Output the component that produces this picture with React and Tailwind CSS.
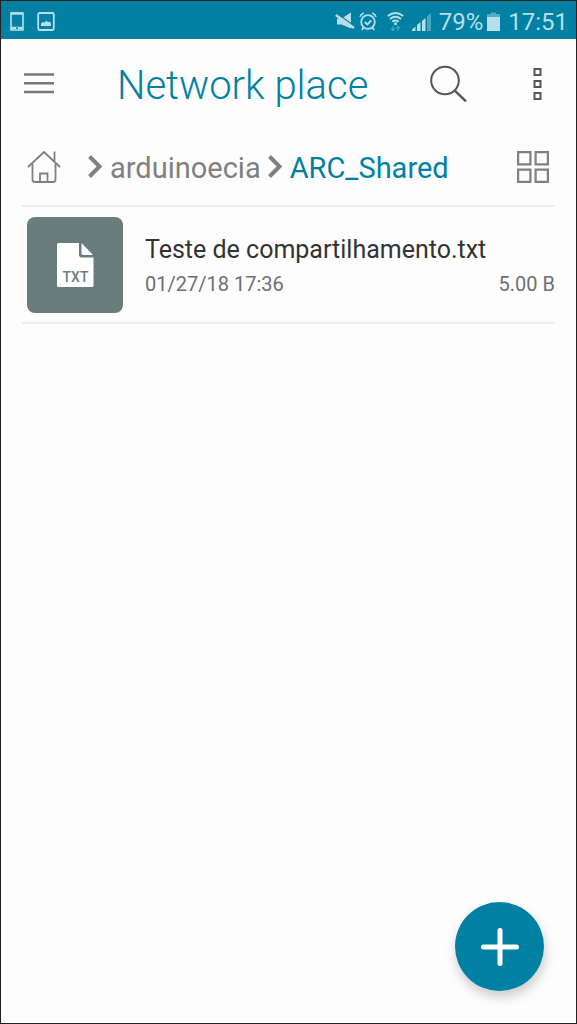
import clsx from "clsx";

const path = [
  { name: "arduinoecia", current: false },
  { name: "ARC_Shared", current: true },
];

const files = [
  {
    name: "Teste de compartilhamento.txt",
    date: "01/27/18 17:36",
    size: "5.00 B",
    type: "TXT",
  },
];

const StatusBar = () => (
  <div className="flex h-[38px] items-center justify-between bg-[#0081a3] pt-1 pr-2 pl-2 text-[#b8dfe9]">
    <div className="flex items-center gap-3">
      <svg width="16" height="20" viewBox="0 0 16 20" fill="none" stroke="currentColor">
        <path d="M2 1h12v17H2z" strokeWidth="1.6" />
        <path d="M2 1.500h12M2 16h12" strokeWidth="2.4" />
        <path d="M7 16.300h2" stroke="#0081a3" strokeWidth="1.4" />
      </svg>
      <svg width="18" height="20" viewBox="0 0 18 20" fill="none" stroke="currentColor">
        <rect x="1.2" y="1" width="15.6" height="17" rx="1.5" strokeWidth="1.8" />
        <path d="M4 14v-2.500l2-1.500 1.500.5L9.500 8.500l1.500 1.700 1.500-.7 1.500 2V14z" fill="currentColor" stroke="none" />
      </svg>
    </div>

    <div className="flex items-center">
      <svg width="20" height="20" viewBox="0 0 20 20" className="mr-1">
        <path d="M2 6.500h4.500L16 .5v16L6.500 12.500H2z" fill="currentColor" />
        <path d="M2 1.800 20 14.300" stroke="#0081a3" strokeWidth="1.200" />
        <path d="M.8 3 19 16" stroke="currentColor" strokeWidth="2.400" />
      </svg>
      <svg width="18" height="20" viewBox="0 0 18 20" fill="none" stroke="currentColor" strokeWidth="1.8" className="mr-[10px]">
        <circle cx="9" cy="10" r="6.800" />
        <path d="M5.800 10 8.300 12.500l4-4M1 4.700Q2 2 4.800 1M17 4.700Q16 2 13.200 1M4.500 15.500 2.800 18M13.500 15.500l1.700 2.500" />
      </svg>
      <svg width="17" height="20" viewBox="0 0 17 20" fill="none" stroke="currentColor" strokeWidth="1.8" className="mr-2">
        <path d="M.8 4Q8.500-2 16.200 4M3 7Q8.500 2.500 14 7M5.300 9.800Q8.500 7.300 11.700 9.800" />
        <circle cx="8.500" cy="11.800" r="1.500" fill="currentColor" stroke="none" />
        <path d="M6 14v4.500M4.200 16.500 6 18.500l1.800-2M11 19v-4.500M9.200 16.500l1.800-2 1.800 2" strokeWidth="1.200" opacity=".4" />
      </svg>
      <svg width="19" height="20" viewBox="0 0 19 20" fill="currentColor" className="mr-2">
        <path d="M0 19v-1.500L3.500 14.500V19zM5 19v-6l3.500-3v9zM10 19V9l3.500-3v13z" />
        <path d="M15 19V4.500L19 1v18z" opacity=".4" />
      </svg>
      <span className="mr-1 text-2xl leading-8">79%</span>
      <svg width="13" height="20" viewBox="0 0 13 20" fill="currentColor" className="mr-2">
        <path d="M4 .5h5V2h4v3.500H0V2h4z" opacity=".45" />
        <path d="M0 5h13v14H0z" />
      </svg>
      <span className="text-2xl leading-8">17:51</span>
    </div>
  </div>
);

const Toolbar = () => (
  <header className="flex h-[90px] items-center pr-[26px] pl-[23px] text-[#555]">
    <button type="button" aria-label="Menu" className="text-[#777]">
      <svg width="30" height="24" viewBox="0 0 30 24" stroke="currentColor" strokeWidth="2.600">
        <path d="M0 2.500h30M0 11.300h30M0 20h30" />
      </svg>
    </button>
    <h1 className="ml-[63px] flex-1 pt-1 text-[40px] leading-[48px] font-light whitespace-nowrap text-[#0081a3]">
      Network place
    </h1>
    <button type="button" aria-label="Search">
      <svg width="38" height="38" viewBox="0 0 38 38" fill="none" stroke="currentColor" strokeWidth="2">
        <circle cx="15" cy="15.500" r="13.800" />
        <path d="M24.500 25.300l11.500 11" strokeWidth="2.400" />
      </svg>
    </button>
    <button type="button" aria-label="More options" className="ml-[58px]">
      <svg width="24" height="34" viewBox="0 0 24 34" fill="none" stroke="currentColor" strokeWidth="2">
        <path d="M8.500 2h6v6h-6zM8.500 14h6v6h-6zM8.500 26h6v6h-6z" />
      </svg>
    </button>
  </header>
);

const Breadcrumb = () => (
  <nav className="mx-[21px] flex h-[78px] items-center border-b-2 border-[#ededed] pr-[6px] pl-[5px] text-[#808080]">
    <a href="#home" aria-label="Home" className="mr-6">
      <svg width="34" height="34" viewBox="0 0 34 34" fill="none" stroke="currentColor" strokeWidth="1.800">
        <path d="M1 17 17 2l16 15" />
        <path d="M5.500 14v15.500q0 2.500 2.500 2.500h18q2.500 0 2.500-2.500V14M27.500 11V1.500M13 32v-8.500h7.500V32" />
      </svg>
    </a>
    {path.map((folder) => (
      <div key={folder.name} className="flex items-center">
        <svg width="22" height="26" viewBox="0 0 22 26" fill="none" stroke="currentColor" strokeWidth="4" className="mr-[3px]">
          <path d="M4.500 2.500 14.500 12.500 4.500 22.500" />
        </svg>
        <a
          href={`#${folder.name}`}
          className={clsx(
            "mr-1 pt-[2px] text-[29px] leading-10",
            folder.current && "text-[#0081a3]"
          )}
        >
          {folder.name}
        </a>
      </div>
    ))}
    <button type="button" aria-label="Grid view" className="ml-auto">
      <svg width="32" height="32" viewBox="0 0 32 32" fill="none" stroke="currentColor" strokeWidth="2.200">
        <path d="M1.100 1.100h12.300v12.300H1.100zM18.600 1.100h12.300v12.300H18.600zM1.100 18.600h12.300v12.300H1.100zM18.600 18.600h12.300v12.300H18.600z" />
      </svg>
    </button>
  </nav>
);

const FileRow = ({ file }) => (
  <li className="mx-[21px] flex items-center gap-[22px] border-b-2 border-[#ededed] pt-[10px] pb-[9px] pl-[5px]">
    <div className="flex size-24 shrink-0 items-center justify-center rounded-lg bg-[#697d7d]">
      <svg width="38" height="44" viewBox="0 0 38 44" fill="#fff">
        <path d="M2.500 0H23v11.500q0 3 3 3h11.500V42.500q0 1.500-1.500 1.500h-33.500Q1 44 1 42.500v-41Q1 0 2.500 0z" />
        <path d="M25.500 0 37 12H27q-1.500 0-1.500-1.500z" />
        <text x="19.500" y="38.500" textAnchor="middle" fontSize="14" fontWeight="500" fill="#697d7d">
          {file.type}
        </text>
      </svg>
    </div>
    <div className="min-w-0 flex-1 pt-[2px]">
      <p className="truncate text-[25px] leading-9 text-[#333]">{file.name}</p>
      <div className="flex justify-between text-xl leading-8 text-[#707070]">
        <span>{file.date}</span>
        <span>{file.size}</span>
      </div>
    </div>
  </li>
);

const App = () => {
  return (
    <div className="min-h-screen border border-[#222] bg-[#fdfdfd] font-[Roboto,sans-serif]">
      <StatusBar />
      <Toolbar />
      <Breadcrumb />
      <ul>
        {files.map((file) => (
          <FileRow key={file.name} file={file} />
        ))}
      </ul>

      <button
        type="button"
        aria-label="Add"
        className="fixed right-[33px] bottom-[33px] flex size-[89px] items-center justify-center rounded-full bg-[#0081a3] text-white shadow-[1px_6px_12px_rgba(0,0,0,0.2)]"
      >
        <svg width="38" height="38" viewBox="0 0 38 38" stroke="currentColor" strokeWidth="5" strokeLinecap="round">
          <path d="M19 2.500v33M2.500 19h33" />
        </svg>
      </button>
    </div>
  );
};

export default App;
